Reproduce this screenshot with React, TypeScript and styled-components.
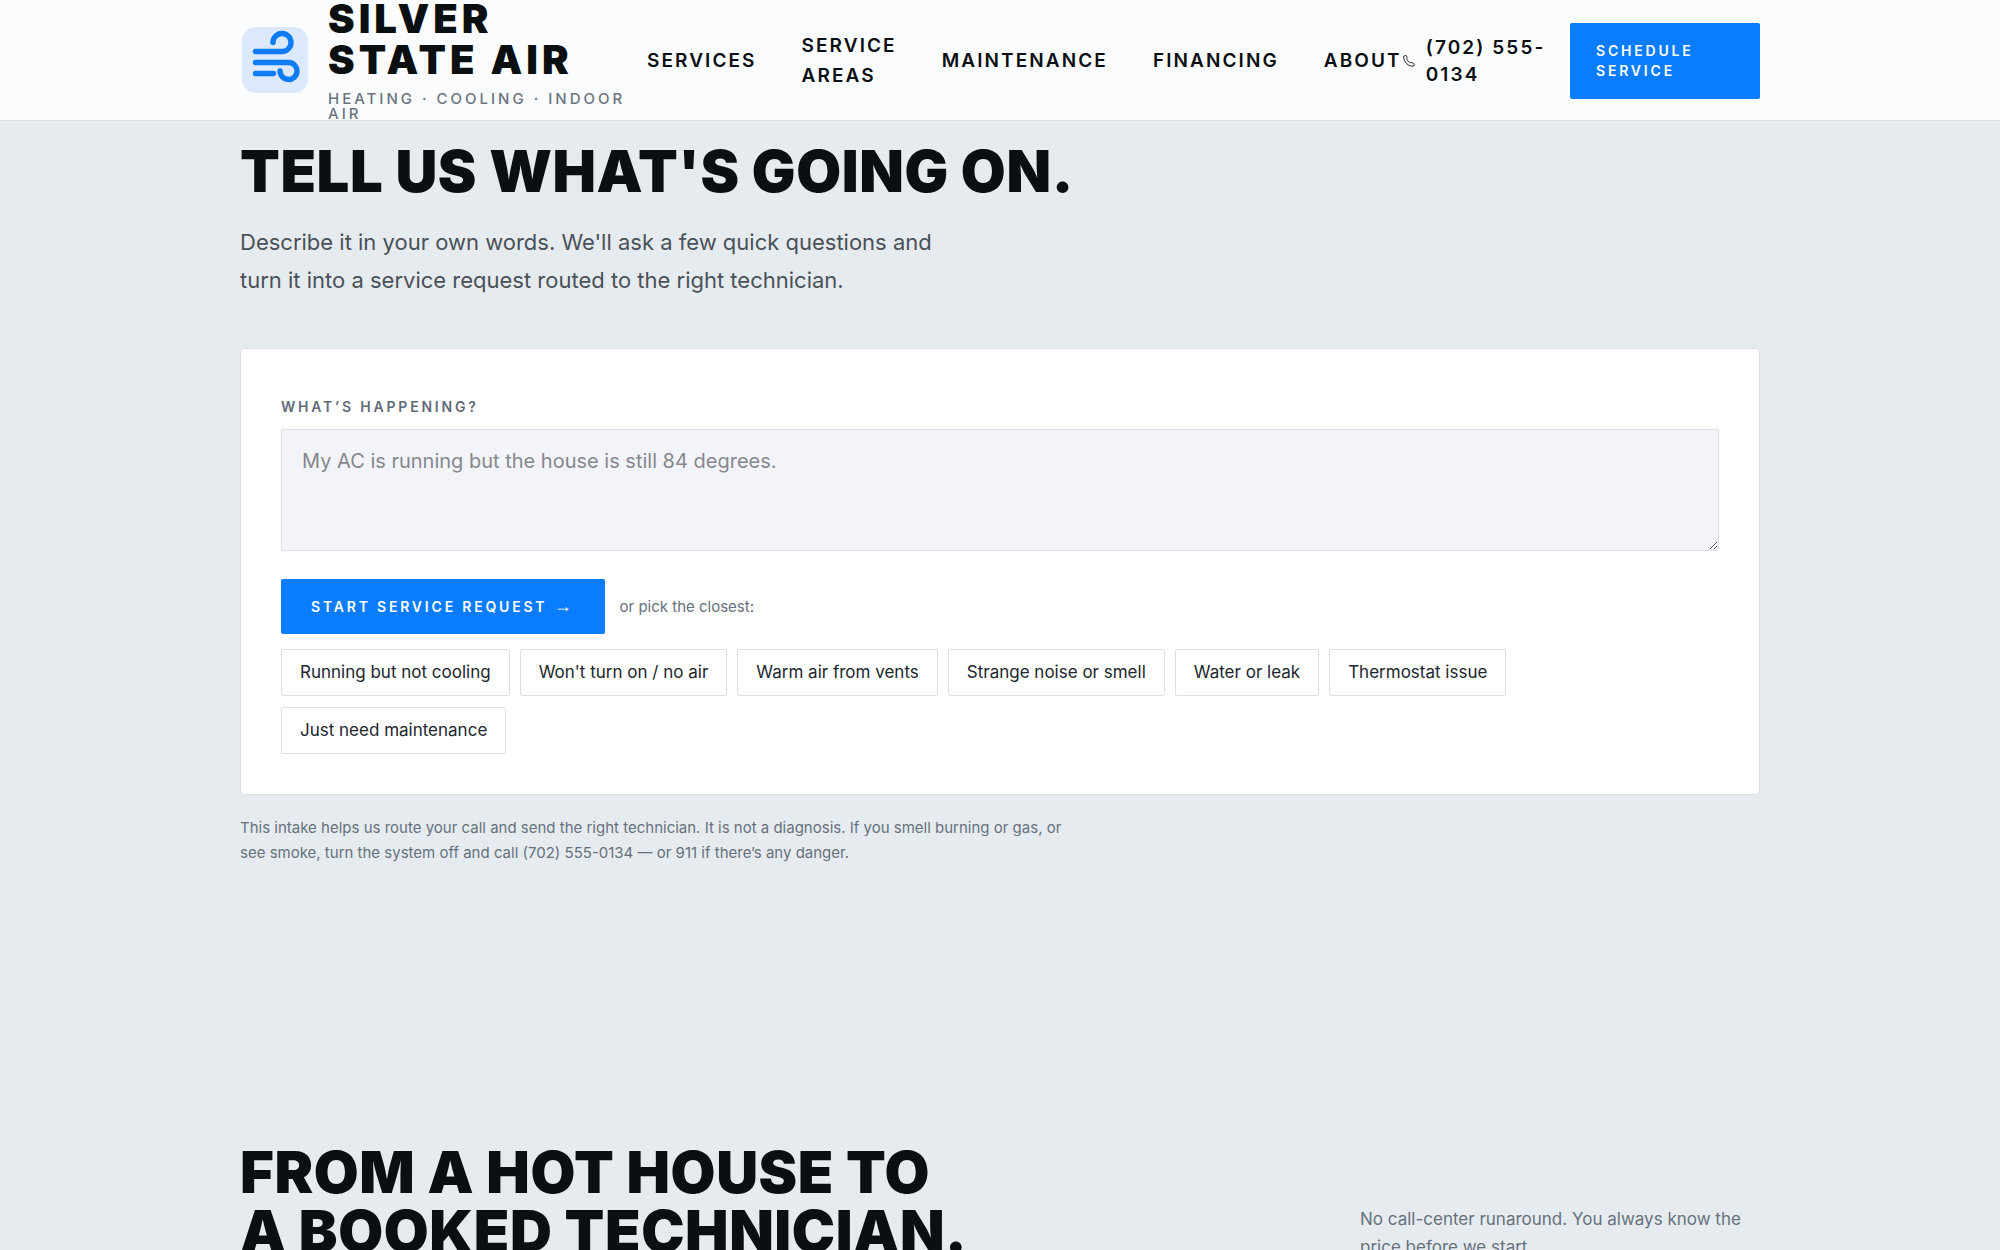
import React, { useState } from "react";
import styled, { createGlobalStyle } from "styled-components";

const Global = createGlobalStyle`
  * { box-sizing: border-box; }
  body {
    margin: 0;
    background: #e6ebef;
    color: #0a0f12;
    font-family: Inter, "Liberation Sans", sans-serif;
  }
  h2, p { margin: 0; }
`;

const Shell = styled.div`
  max-width: 1520px;
  margin: 0 auto;
`;

const Header = styled.header`
  position: sticky;
  top: 0;
  z-index: 10;
  height: 121px;
  background: #fbfcfe;
  border-bottom: 1px solid #dfe3e8;
`;

const HeaderRow = styled(Shell)`
  height: 121px;
  display: flex;
  align-items: center;
`;

const Brand = styled.a`
  display: flex;
  align-items: center;
  align-self: flex-start;
  gap: 18px;
  width: 388px;
  height: 119px;
  flex-shrink: 0;
  color: inherit;
  text-decoration: none;
  svg { flex-shrink: 0; }
`;

const BrandText = styled.span`
  display: flex;
  flex-direction: column;
  gap: 11px;
`;

const BrandName = styled.span`
  max-width: 260px;
  font-size: 40px;
  line-height: 41px;
  font-weight: 900;
  letter-spacing: 0.1em;
`;

const BrandTag = styled.span`
  font-size: 15px;
  line-height: 15px;
  font-weight: 500;
  letter-spacing: 0.2em;
  color: #6b7480;
`;

const Nav = styled.nav`
  display: flex;
  align-items: center;
  gap: 45px;
  margin-left: 19px;
`;

const NavLink = styled.a<{ $stacked?: boolean }>`
  width: ${(p) => (p.$stacked ? "min-content" : "auto")};
  font-size: 19px;
  line-height: 30px;
  font-weight: 600;
  letter-spacing: 0.11em;
  color: inherit;
  text-decoration: none;
`;

const Phone = styled.a`
  display: flex;
  align-items: center;
  gap: 10px;
  font-size: 19px;
  line-height: 27px;
  font-weight: 600;
  letter-spacing: 0.11em;
  color: inherit;
  text-decoration: none;
  span { width: min-content; }
`;

const PrimaryButton = styled.button`
  padding: 18px 30px;
  border: 0;
  border-radius: 2px;
  background: #0a7cff;
  color: #fff;
  font: 600 14px/19px Inter, sans-serif;
  letter-spacing: 0.2em;
  text-align: left;
  cursor: pointer;
`;

const Arrow = styled.span`
  font-family: "Liberation Sans", sans-serif;
  font-weight: 400;
  font-size: 18px;
  line-height: 1;
`;

const ScheduleButton = styled(PrimaryButton)`
  width: 190px;
  padding: 18px 26px;
  line-height: 20px;
  margin-left: auto;
`;

const Intake = styled.section`
  padding: 21px 0 139px;
`;

const Title = styled.h2`
  font-size: 58px;
  line-height: 59px;
  font-weight: 900;
  letter-spacing: 0.01em;
`;

const Lead = styled.p`
  max-width: 720px;
  margin-top: 22px;
  font-size: 22px;
  line-height: 38px;
  color: #4a5158;
`;

const Card = styled.form`
  margin-top: 49px;
  padding: 48px 40px 40px;
  background: #fff;
  border: 1px solid #dce0e5;
  border-radius: 4px;
`;

const Label = styled.label`
  display: block;
  margin-bottom: 12px;
  font-size: 14px;
  line-height: 20px;
  font-weight: 600;
  letter-spacing: 0.2em;
  color: #5f6b78;
`;

const Box = styled.textarea`
  display: block;
  width: 100%;
  height: 122px;
  padding: 16px 20px;
  border: 1px solid #dce0e5;
  border-radius: 2px;
  background: #f3f4f9;
  color: inherit;
  font: 400 20px/30px Inter, sans-serif;
  resize: vertical;
  &::placeholder { color: #85888d; }
`;

const Actions = styled.div`
  display: flex;
  align-items: center;
  gap: 15px;
  margin: 28px 0 15px;
`;

const Hint = styled.span`
  font-size: 15px;
  line-height: 24px;
  color: #66717d;
`;

const Chips = styled.div`
  display: flex;
  flex-wrap: wrap;
  gap: 11px 10px;
  max-width: 1240px;
`;

const Chip = styled.button`
  padding: 10px 18px;
  border: 1px solid #dce0e5;
  border-radius: 2px;
  background: #fff;
  color: #20262d;
  font: 400 17px/25px Inter, sans-serif;
  cursor: pointer;
`;

const Note = styled.p`
  max-width: 840px;
  margin-top: 20px;
  font-size: 15px;
  line-height: 25px;
  color: #66717d;
`;

const Steps = styled.section`
  padding: 139px 0;
`;

const StepsHead = styled.div`
  display: flex;
  justify-content: space-between;
  align-items: flex-end;
`;

const StepsTitle = styled(Title)`
  max-width: 745px;
`;

const Aside = styled.p`
  width: 400px;
  font-size: 17px;
  line-height: 28px;
  color: #66717d;
`;

const issues = [
  "Running but not cooling",
  "Won't turn on / no air",
  "Warm air from vents",
  "Strange noise or smell",
  "Water or leak",
  "Thermostat issue",
  "Just need maintenance",
];

const WindMark = () => (
  <svg width="70" height="70" viewBox="0 0 70 70" fill="none" aria-hidden="true">
    <rect x="2" y="2" width="66" height="66" rx="14" fill="#dbe9fb" />
    <g stroke="#0f7bf5" strokeWidth="5.4" strokeLinecap="round">
      <path d="M15.500 26.500H42A9 9 0 1 0 33 17.500" />
      <path d="M15.500 37.500H49A8.500 8.500 0 1 1 40 46" />
      <path d="M15.500 48.500H33.500" />
    </g>
  </svg>
);

const PhoneMark = () => (
  <svg width="14" height="14" viewBox="0 0 14 14" fill="none" stroke="#20262d" aria-hidden="true">
    <path d="M1.800 2.200L3.800 1.300C4.600 1.300 5.200 3.400 5 4.200C4.600 5 4.900 5.800 6 7C7.200 8.400 8.200 8.900 9.200 8.600C10.200 8.400 12 9.300 12.200 10.200L11.600 12C6.500 13.200 1 7.500 1.800 2.200Z" />
  </svg>
);

export default function App() {
  const [text, setText] = useState("");
  return (
    <>
      <Global />
      <Header>
        <HeaderRow>
          <Brand href="#top">
            <WindMark />
            <BrandText>
              <BrandName>SILVER STATE AIR</BrandName>
              <BrandTag>HEATING · COOLING · INDOOR AIR</BrandTag>
            </BrandText>
          </Brand>
          <Nav>
            <NavLink href="#services">SERVICES</NavLink>
            <NavLink href="#areas" $stacked>SERVICE AREAS</NavLink>
            <NavLink href="#maintenance">MAINTENANCE</NavLink>
            <NavLink href="#financing">FINANCING</NavLink>
            <NavLink href="#about">ABOUT</NavLink>
          </Nav>
          <Phone href="tel:7025550134">
            <PhoneMark />
            <span>(702){"\u00a0"}555-0134</span>
          </Phone>
          <ScheduleButton type="button">SCHEDULE SERVICE</ScheduleButton>
        </HeaderRow>
      </Header>
      <main>
        <Intake>
          <Shell>
            <Title>TELL US WHAT'S GOING ON.</Title>
            <Lead>
              Describe it in your own words. We'll ask a few quick questions and turn it into a
              service request routed to the right technician.
            </Lead>
            <Card onSubmit={(e) => e.preventDefault()}>
              <Label htmlFor="issue">WHAT’S HAPPENING?</Label>
              <Box
                id="issue"
                value={text}
                onChange={(e) => setText(e.target.value)}
                placeholder="My AC is running but the house is still 84 degrees."
              />
              <Actions>
                <PrimaryButton type="submit">
                  START SERVICE REQUEST <Arrow>→</Arrow>
                </PrimaryButton>
                <Hint>or pick the closest:</Hint>
              </Actions>
              <Chips>
                {issues.map((issue) => (
                  <Chip key={issue} type="button" onClick={() => setText(issue)}>
                    {issue}
                  </Chip>
                ))}
              </Chips>
            </Card>
            <Note>
              This intake helps us route your call and send the right technician. It is not a
              diagnosis. If you smell burning or gas, or see smoke, turn the system off and call
              (702) 555-0134 — or 911 if there’s any danger.
            </Note>
          </Shell>
        </Intake>
        <Steps>
          <Shell>
            <StepsHead>
              <StepsTitle>FROM A HOT HOUSE TO A BOOKED TECHNICIAN.</StepsTitle>
              <Aside>No call-center runaround. You always know the price before we start.</Aside>
            </StepsHead>
          </Shell>
        </Steps>
      </main>
    </>
  );
}
